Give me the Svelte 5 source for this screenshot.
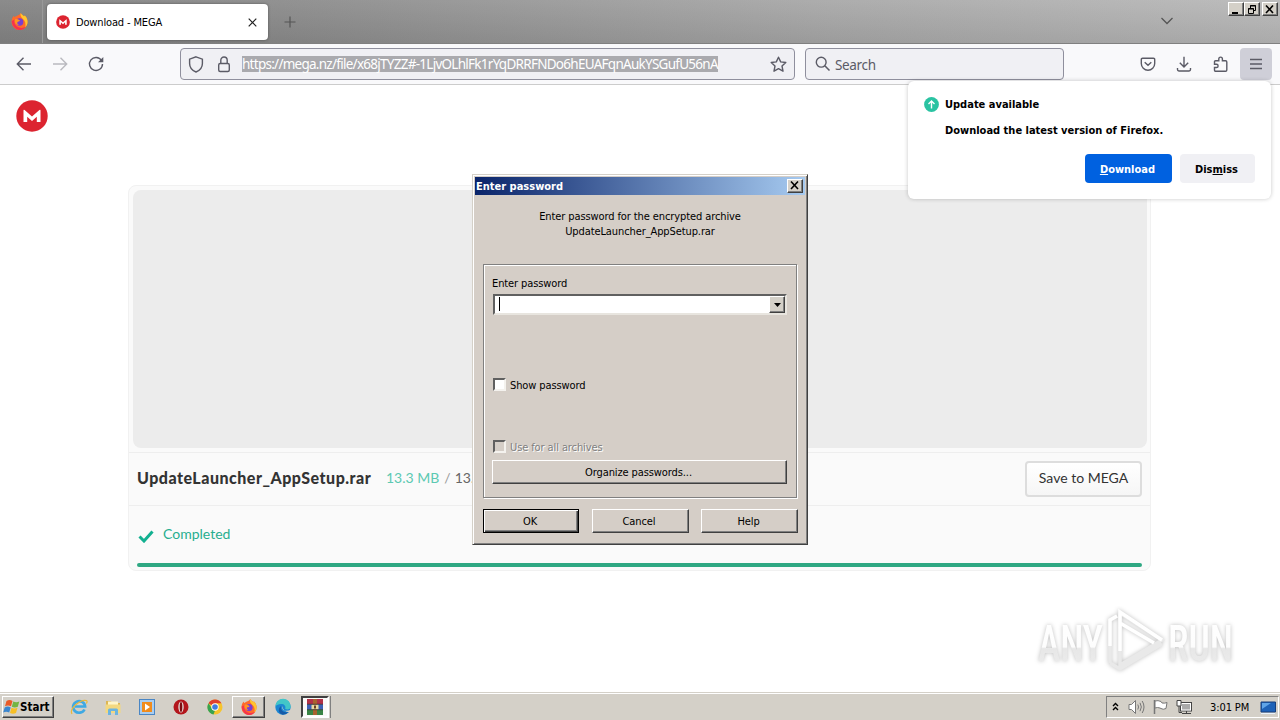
<script>
  let password = $state('');
  let showPassword = $state(false);

  const url = 'https://mega.nz/file/x68jTYZZ#-1LjvOLhlFk1rYqDRRFNDo6hEUAFqnAukYSGufU56nA';
  const fileName = 'UpdateLauncher_AppSetup.rar';
</script>

{#snippet mega(size)}
  <svg width={size} height={size} viewBox="0 0 32 32">
    <circle cx="16" cy="16" r="15.7" fill="#dc2430" />
    <path d="M7.500 22V10.500q0-1.200 1.100-.5L16 16.500l7.400-6.500q1.100-.7 1.100.5V22h-3.700v-5.300L16 21l-4.800-4.300V22z" fill="#fff" />
  </svg>
{/snippet}

{#snippet firefox(size)}
  <svg width={size} height={size} viewBox="0 0 16 16">
    <path d="M8 1.500C9 .8 9 .2 9.200 0c.7 1.500 2 2 3 3l.8-.6c2 2 2.600 4.200 2.600 6A7.500 7.500 0 0 1 .5 8.700C.4 6.500 1.300 4 2.600 2.600l.5 1.500C4.500 3 6 2.700 8 1.500z" fill="#ff6a2b" />
    <path d="M9.200 0c.7 1.500 2 2 3 3l.8-.6c2 2 2.600 4.200 2.600 6 0 2-1 4-2.200 5 .8-3 .1-6-2.400-8C9.500 4 8.300 2 9.200 0z" fill="#ffc52e" />
    <path d="M.7 7.500C1 12 4 15.800 8 15.900c3 0 5-1.600 6-3-3 1.800-8 1.600-10-2C3 9 3 7.500 3.600 6z" fill="#f5334e" />
    <circle cx="8.100" cy="8.500" r="3.500" fill="#7a3fd0" />
    <path d="M3.600 6c1.500-.8 3-.4 4 .5l1 .9c-1 .8-2 .6-2.600 1.200-.5 1 .3 2 1.600 2.300C5 11.500 3 9 3.600 6z" fill="#ff9520" />
  </svg>
{/snippet}

<div class="screen">
  <header class="tabs">
    <div class="ff-home">{@render firefox(17)}</div>
    <div class="tab">
      {@render mega(14)}
      <span class="tab-title">Download - MEGA</span>
      <svg class="tab-close" width="9" height="9" viewBox="0 0 9 9"><path d="M.7.7l7.600 7.600M8.300.7L.7 8.300" stroke="#222" stroke-width="1.200" /></svg>
    </div>
    <svg class="new-tab" width="12" height="12" viewBox="0 0 12 12"><path d="M6 .5v11M.5 6h11" stroke="#555" stroke-width="1.200" /></svg>
    <svg class="all-tabs" width="14" height="8" viewBox="0 0 14 8"><path d="M1.500 1L7 6.500 12.500 1" fill="none" stroke="#555" stroke-width="1.300" /></svg>
    <div class="win-buttons">
      <button class="cap" aria-label="Minimize"><svg width="10" height="9"><path d="M1 7h6v2H1z" /></svg></button>
      <button class="cap" aria-label="Restore"><svg width="10" height="9" fill="none" stroke="#000"><path d="M3.500 3V.5h5v5H7M3 1h6M1.500 3.500h5v5h-5zM1 4h6" /></svg></button>
      <button class="cap last" aria-label="Close"><svg width="10" height="9"><path d="M1 .5l7 7.500M8 .5L1 8" stroke="#000" stroke-width="1.600" /></svg></button>
    </div>
  </header>

  <nav class="toolbar">
    <svg class="back" width="16" height="16" viewBox="0 0 16 16"><path d="M15 8H1.500M7.500 1.800L1.300 8l6.200 6.200" /></svg>
    <svg class="forward" width="16" height="16" viewBox="0 0 16 16"><path d="M1 8h13.500M8.500 1.800L14.700 8l-6.200 6.200" /></svg>
    <svg class="reload" width="16" height="16" viewBox="0 0 16 16"><path d="M13.500 4.500A6.500 6.500 0 1 0 14.500 8" /><path d="M15.300 1v5.300H10z" fill="#5b5b66" stroke="none" /></svg>
    <div class="urlbar">
      <svg width="16" height="17" viewBox="0 0 16 17"><path d="M8 .8l6.400 2.400v4.300c0 4-2.600 7-6.400 8.500C4.200 14.500 1.600 11.500 1.600 7.500V3.200z" /></svg>
      <svg class="lock" width="14" height="17" viewBox="0 0 14 17"><rect x="1.700" y="7.500" width="10.600" height="8" rx="1.500" /><path d="M3.800 7.500V4.200a3.200 3.200 0 0 1 6.400 0v3.300" /></svg>
      <span class="url">{url}</span>
      <svg class="star" width="17" height="17" viewBox="0 0 17 17"><path d="M8.500 1.200l2.200 4.700 5.100.6-3.800 3.500 1 5.200-4.500-2.600L4 15.200 5 10 1.200 6.500l5.100-.6z" stroke-linejoin="round" /></svg>
    </div>
    <div class="search">
      <svg width="16" height="16" viewBox="0 0 16 16"><circle cx="6.200" cy="6.200" r="4.900" /><path d="M9.800 9.800l4.700 4.700" stroke-width="1.600" /></svg>
      <span>Search</span>
    </div>
    <div class="actions">
      <svg width="16" height="16" viewBox="0 0 16 16"><path d="M2.500 2.200h11a1.200 1.200 0 0 1 1.200 1.200V7.500a6.700 6.700 0 0 1-13.400 0V3.400a1.200 1.200 0 0 1 1.200-1.200zM4.700 6.200L8 9.300l3.300-3.100" /></svg>
      <svg width="16" height="16" viewBox="0 0 16 16"><path d="M8 .8v10M3.800 6.800L8 11l4.200-4.200M1.500 12v1.600q0 1.400 1.400 1.400h10.200q1.400 0 1.400-1.400V12" /></svg>
      <svg class="puzzle" width="16" height="16" viewBox="0 0 16 16"><path d="M2.500 4.700h3.300V2.900a1.800 1.800 0 0 1 3.600 0v1.800h3.200q1.200 0 1.200 1.200V14q0 1.200-1.200 1.200H2.700q-1.200 0-1.200-1.200v-2.500h2a1.600 1.600 0 0 0 0-3.200h-2V5.700q0-1 1-1z" /></svg>
      <button class="menu" aria-label="Menu"><svg width="14" height="12" viewBox="0 0 14 12"><path d="M1 1.500h12M1 6h12M1 10.500h12" /></svg></button>
    </div>
  </nav>

  <main>
    <div class="logo">{@render mega(32)}</div>
    <section class="card">
      <div class="preview"></div>
      <div class="file-row">
        <strong>{fileName}</strong>
        <span class="done">13.3 MB</span><span class="slash">/</span><span class="total">13.3 MB</span>
        <button class="save">Save to MEGA</button>
      </div>
      <div class="status">
        <svg width="16" height="13" viewBox="0 0 16 13"><path d="M1.500 6.500L6 11 14.500 1.500" fill="none" stroke="#12b090" stroke-width="3" /></svg>
        <span>Completed</span>
      </div>
      <div class="progress"></div>
    </section>

    <svg class="watermark" width="220" height="76" viewBox="0 0 220 76">
      <defs>
        <linearGradient id="wm" x1="0" y1="0" x2="0" y2="1">
          <stop offset="0" stop-color="#fff" />
          <stop offset=".55" stop-color="#fdfdfd" />
          <stop offset=".58" stop-color="#e7e7e7" />
          <stop offset="1" stop-color="#eee" />
        </linearGradient>
      </defs>
      <g class="wm-text">
        <text x="5" y="55" textLength="65" lengthAdjust="spacingAndGlyphs" fill="url(#wm)">ANY</text>
        <text x="135" y="55" textLength="65" lengthAdjust="spacingAndGlyphs" fill="url(#wm)">RUN</text>
        <g fill="none" stroke-width="3.500">
          <path d="M77 57V14l7-4M77 57l10 6 42-25M87 53V7l42 27-42 25z" stroke="#e9e9e9" />
          <path d="M77 40V14l7-4M87 45V6l42 28M87 17l34 20" stroke="#fff" />
        </g>
      </g>
    </svg>
  </main>

  <footer class="taskbar">
    <button class="start">
      <svg width="17" height="16" viewBox="0 0 17 16">
        <path d="M3.500 2q3-2 6 0L8 7.300q-3-1.500-6 0z" fill="#ea5a27" /><path d="M10.300 2.500q3 1.500 6 0l-1.500 5.200q-3 1.500-6 0z" fill="#73b543" />
        <path d="M1.700 8.400q3-1.700 6 0L6.200 13.500q-3-1.500-6 0z" fill="#3b86cf" /><path d="M8.500 8.800q3 1.500 6 0L13 14q-3 1.500-6 0z" fill="#f7bf26" />
      </svg><span>Start</span>
    </button>
    <div class="apps">
      <span class="app"><svg width="18" height="18" viewBox="0 0 18 18"><path d="M14.500 11.500a6 5.800 0 1 1 .6-3H5" fill="none" stroke="#3fa9e3" stroke-width="2.700" /><path d="M2 16C-1 11 10 1 16.500 2.500c1 .6.500 2-.2 3" fill="none" stroke="#e9b83a" stroke-width="1.200" /></svg></span>
      <span class="app"><svg width="18" height="18" viewBox="0 0 18 18"><path d="M2 3h5l1 2h8v9H2z" fill="#dcb654" /><path d="M4 3.500h10v4H4z" fill="#fff5c8" /><path d="M1.500 6.500h15V15h-15z" fill="#f3d880" /><path d="M4 17v-5q0-1.500 1.500-1.500h7q1.500 0 1.500 1.500v5h-3v-4H7v4z" fill="#6bb4e0" /></svg></span>
      <span class="app"><svg width="18" height="18" viewBox="0 0 18 18"><rect x="1.500" y="1.500" width="15" height="15" fill="#a9cdf0" stroke="#4a86c4" /><rect x="4" y="4" width="10" height="10" fill="#f18c1c" /><path d="M7 5.500l5 3.500-5 3.500z" fill="#fff" /></svg></span>
      <span class="app"><svg width="18" height="18" viewBox="0 0 18 18"><circle cx="9" cy="9" r="7.500" fill="#b3161c" /><ellipse cx="9" cy="9" rx="2.700" ry="5.500" fill="#e6d9d6" /><ellipse cx="9" cy="9" rx="1.300" ry="5" fill="#7d0d12" /></svg></span>
      <span class="app"><svg width="18" height="18" viewBox="0 0 18 18"><circle cx="9" cy="9" r="7.500" fill="#f6c42c" /><path d="M9 9L2.500 5.200A7.500 7.500 0 0 1 15.500 5.300H9z" fill="#e0402f" /><path d="M2.500 5.200L7 12l2 .5-1.500 4A7.500 7.500 0 0 1 2.500 5.200z" fill="#37a350" /><circle cx="9" cy="9" r="3.700" fill="#fff" /><circle cx="9" cy="9" r="2.800" fill="#3f7de0" /></svg></span>
      <span class="app raised">{@render firefox(16)}</span>
      <span class="app edge"><svg width="18" height="18" viewBox="0 0 18 18"><circle cx="9" cy="9" r="7.700" fill="#1b86d2" /><path d="M1.400 8.500A7.600 7.600 0 0 1 16.700 8.500c0 3-3 3.500-5.500 2.500 1-3-1-5-4-5-2.500 0-4.900 1-5.800 2.500z" fill="#42c6c8" /><path d="M7 8c-1 4 3 7.500 7.500 6A7.500 7.500 0 0 1 8 16.600C4 15 4 10 7 8z" fill="#155aa8" /><path d="M8.500 8q-1 4.500 3.500 4.800 3 .2 5-1.500v1.500l-1.500 1.500Q9 14 8.500 8z" fill="#d4d0c8" /></svg></span>
      <span class="app pressed"><svg width="18" height="18" viewBox="0 0 18 18"><path d="M1 1h16v5.300H1z" fill="#b23148" /><path d="M1 6.300h16v5.400H1z" fill="#3d60b5" /><path d="M1 11.700h16V17H1z" fill="#3a8545" /><path d="M7 1h4v16H7z" fill="#a9622e" /><path d="M5.500 6.500h7v5h-7z" fill="#e7d9a0" /><path d="M8 7.500h2v3H8z" fill="#6b4022" /><path d="M1 6.300h16M1 11.700h16" stroke="#222" stroke-width=".7" /></svg></span>
    </div>
    <div class="tray">
      <svg class="chevrons" width="7" height="9" viewBox="0 0 7 9"><path d="M1 4l2.500-2.500L6 4M1 8l2.500-2.500L6 8" fill="none" stroke="#000" stroke-width="1.400" /></svg>
      <svg class="speaker" width="17" height="16" viewBox="0 0 17 16"><path d="M1 5.500h2.500l4-4v13l-4-4H1z" fill="#fff" stroke="#777" /><path d="M9.800 5.500q1.500 2.500 0 5M12 3.800q2.700 4.200 0 8.400M14.200 2q3.600 6 0 12" fill="none" stroke="#777" /></svg>
      <svg class="flag" width="17" height="16" viewBox="0 0 17 16"><path d="M2.500 1v14" stroke="#777" stroke-width="1.500" /><path d="M3 2q3-1 6 .5l1 1.500q3 .5 5-.5l-1 6q-3 1.500-5 0L8 9Q5.500 8 3 9z" fill="#fff" stroke="#777" /></svg>
      <svg class="net" width="17" height="16" viewBox="0 0 17 16"><rect x="4.500" y="3.500" width="11" height="8.500" fill="#aaa" stroke="#444" /><rect x="5.500" y="4.500" width="9" height="6.500" fill="none" stroke="#fff" /><path d="M6 14.500h9M10.500 12v2.500M3 7v6.500h3" stroke="#444" fill="none" /><path d="M1 1.500h4V7H1z" fill="#fff" stroke="#444" /></svg>
      <span class="clock">3:01 PM</span>
      <svg class="desk" width="16" height="14" viewBox="0 0 16 14"><path d="M1 1h14.500v10H1z" fill="#1e62b8" stroke="#173f7c" /><path d="M2 2h9L2 8z" fill="#5fa4e8" /><path d="M1 12.500h14" stroke="#e9f2fb" /></svg>
    </div>
  </footer>

  <aside class="update">
    <svg width="15" height="15" viewBox="0 0 15 15"><circle cx="7.500" cy="7.500" r="7.400" fill="#2ac3a2" /><path d="M7.500 11.500v-7M4.500 7l3-3 3 3" fill="none" stroke="#fff" stroke-width="1.400" /></svg>
    <div class="update-body">
      <h2>Update available</h2>
      <p>Download the latest version of Firefox.</p>
      <div class="update-buttons">
        <button class="primary"><u>D</u>ownload</button>
        <button>Dis<u>m</u>iss</button>
      </div>
    </div>
  </aside>

  <div class="dialog">
    <div class="titlebar">
      <span>Enter password</span>
      <button class="cap" aria-label="Close"><svg width="10" height="9"><path d="M1 .5l7 7.500M8 .5L1 8" stroke="#000" stroke-width="1.600" /></svg></button>
    </div>
    <p class="prompt">Enter password for the encrypted archive<br />{fileName}</p>
    <div class="group">
      <label class="pw-label" for="pw">Enter password</label>
      <div class="combo">
        <span class="caret"></span>
        <input id="pw" bind:value={password} type={showPassword ? 'text' : 'password'} />
        <button class="drop" aria-label="History"><svg width="7" height="4"><path d="M0 0h7L3.500 4z" /></svg></button>
      </div>
      <label class="check show"><input type="checkbox" bind:checked={showPassword} /><i></i><span>Show password</span></label>
      <label class="check all"><input type="checkbox" disabled /><i></i><span>Use for all archives</span></label>
      <button class="btn organize">Organize passwords...</button>
    </div>
    <div class="buttons">
      <button class="btn default">OK</button>
      <button class="btn">Cancel</button>
      <button class="btn">Help</button>
    </div>
  </div>
</div>

<style>
:global(body) {
  margin: 0;
  overflow: hidden;
}

.screen {
  position: relative;
  display: flex;
  flex-direction: column;
  width: 1280px;
  height: 720px;
  background: #fff;
  color: #000;
  font-family: "DejaVu Sans Condensed", "DejaVu Sans", sans-serif;
  font-stretch: condensed;
  font-size: 11px;
}

.screen * {
  box-sizing: border-box;
}

svg {
  display: block;
  flex: none;
}

button {
  padding: 0;
  border: 0;
  color: inherit;
  font: inherit;
  letter-spacing: inherit;
}

/* tab strip */
.tabs {
  display: flex;
  height: 44px;
  background: linear-gradient(to bottom, rgba(255, 255, 255, 0.05), rgba(0, 0, 0, 0.08)), linear-gradient(to right, #858585, #8c8c8c 22%, #a9a9a9 65%, #b9b9b9);
  border-bottom: 1px solid #808080;
}

.ff-home {
  width: 43px;
  padding: 13px 0 0 11px;
  border-right: 1px solid #999;
}

.tab {
  display: flex;
  align-items: center;
  width: 221px;
  height: 36px;
  margin: 4px 0 0 4px;
  padding: 0 11px 0 9px;
  background: #fff;
  border-radius: 4px;
  box-shadow: 0 0 3px rgba(0, 0, 0, 0.4);
}

.tab-title {
  flex: 1;
  margin: 1px 0 0 6px;
  letter-spacing: -0.15px;
}

.new-tab {
  margin: 16px 0 0 16px;
}

.all-tabs {
  margin: 17px 54px 0 auto;
}

.win-buttons {
  display: flex;
  margin: 2px 2px 0 0;
}

.cap {
  display: flex;
  align-items: center;
  justify-content: center;
  width: 16px;
  height: 14px;
  background: #d4d0c8;
  border: 1px solid;
  border-color: #fff #404040 #404040 #fff;
  box-shadow: inset -1px -1px 0 #808080;
}

.cap.last {
  margin-left: 2px;
}

/* toolbar */
.toolbar {
  display: flex;
  align-items: center;
  height: 41px;
  background: #f9f9fb;
  border-bottom: 1px solid #ccc;
  font-family: "Noto Sans", sans-serif;
  font-size: 13.5px;
}

.toolbar svg {
  fill: none;
  stroke: #5b5b66;
  stroke-width: 1.4;
}

.back {
  margin-left: 16px;
}

.forward {
  margin-left: 20px;
  opacity: 0.4;
}

.reload {
  margin-left: 20px;
}

.urlbar,
.search {
  display: flex;
  align-items: center;
  height: 32px;
  background: #f0f0f4;
  border: 1px solid #8f8f9d;
  border-radius: 4px;
}

.urlbar {
  width: 615px;
  margin-left: 76px;
  padding: 0 7px;
}

.lock {
  margin-left: 13px;
}

.url {
  margin-left: 11px;
  height: 16px;
  line-height: 17px;
  background: #aaaaae;
  color: #fff;
  white-space: nowrap;
  letter-spacing: -0.73px;
}

.star {
  margin-left: auto;
}

.search {
  width: 259px;
  margin-left: 10px;
  padding-left: 9px;
  color: #5b5b66;
}

.search span {
  margin: 1px 0 0 4px;
  letter-spacing: -0.35px;
}

.actions {
  display: flex;
  align-items: center;
  gap: 20px;
  margin: 0 8px 0 auto;
}

.puzzle {
  margin-left: 1px;
}

.menu {
  display: flex;
  align-items: center;
  justify-content: center;
  width: 32px;
  height: 32px;
  margin-left: -9px;
  background: #cfcfd8;
  border-radius: 4px;
}

/* page */
main {
  flex: 1;
  display: flex;
  flex-direction: column;
  font-family: Lato, sans-serif;
}

.logo {
  height: 48px;
  padding: 15px 0 0 16px;
}

.card {
  width: 1023px;
  height: 386px;
  margin: 52px 0 0 128px;
  background: #fafafa;
  border: 1px solid #f1f1f1;
  border-radius: 8px;
}

.preview {
  height: 258px;
  margin: 4px 3px 4px 4px;
  background: #ececec;
  border-radius: 8px;
}

.file-row {
  display: flex;
  align-items: center;
  height: 54px;
  padding: 0 8px;
  border: 1px solid #eee;
  border-width: 1px 0;
  font-size: 14px;
  color: #666;
}

.file-row strong {
  width: 249px;
  font-size: 16px;
  font-weight: 900;
  letter-spacing: 0.5px;
  color: #333;
}

.file-row strong,
.file-row span {
  margin-top: -4px;
}

.done {
  color: #5cc9b2;
}

.slash {
  margin: 0 5px;
  color: #999;
}

.total {
  margin-left: -1px;
}

.save {
  width: 117px;
  height: 36px;
  margin-left: auto;
  padding-bottom: 3px;
  background: linear-gradient(#fff, #f6f6f6);
  border: 2px solid #ddd;
  border-radius: 4px;
  color: #333;
}

.status {
  display: flex;
  align-items: center;
  height: 57px;
  padding: 4px 0 0 9px;
  font-size: 14px;
  color: #27ae8f;
}

.status span {
  margin: -7px 0 0 9px;
}

.progress {
  height: 4px;
  margin: 0 8px;
  background: #2fa883;
  border-radius: 2px;
}

.watermark {
  align-self: flex-end;
  margin: 35px 27px 0 0;
}

.wm-text {
  filter: drop-shadow(0 0 2px rgba(0, 0, 0, 0.25));
  font-family: Roboto, sans-serif;
  font-weight: 500;
  font-size: 50px;
}

/* taskbar */
.taskbar {
  display: flex;
  align-items: center;
  height: 28px;
  background: #d4d0c8;
  border-top: 1px solid #d4d0c8;
  box-shadow: inset 0 1px 0 #fff;
}

.start {
  display: flex;
  align-items: center;
  width: 52px;
  height: 22px;
  margin: 1px 0 0 2px;
  background: #d4d0c8;
  border: 1px solid;
  border-color: #fff #404040 #404040 #fff;
  box-shadow: inset -1px -1px 0 #808080;
  font-weight: bold;
}

.start span {
  font-size: 11.5px;
}

.apps {
  display: flex;
  align-items: center;
  margin: 1px 0 0 8px;
}

.app {
  display: flex;
  align-items: center;
  justify-content: center;
  width: 34px;
  height: 22px;
}

.raised {
  width: 33px;
  border: 1px solid;
  border-color: #fff #404040 #404040 #fff;
  box-shadow: inset -1px -1px 0 #808080;
}

.edge {
  margin-left: 1px;
}

.pressed {
  width: 28px;
  margin-left: 1px;
  background: #fbfaf8;
  border: 2px solid;
  border-color: #404040 #fff #fff #404040;
  box-shadow: 1px 0 0 #d4d0c8, 2px 0 0 #808080;
}

.tray {
  display: flex;
  align-items: center;
  width: 173px;
  height: 22px;
  margin: 1px 1px 0 auto;
  padding-left: 5px;
  border: 1px solid;
  border-color: #808080 #fff #fff #808080;
}

.chevrons {
  margin-top: -2px;
}

.speaker {
  margin-left: 9px;
}

.flag,
.net {
  margin-left: 7px;
}

.clock {
  margin-left: 17px;
  letter-spacing: -0.1px;
}

.desk {
  margin: 1px 2px 0 auto;
}

/* update doorhanger */
.update {
  position: absolute;
  top: 81px;
  left: 908px;
  display: flex;
  width: 363px;
  height: 118px;
  padding: 16px 16px 0;
  background: #fff;
  border-radius: 6px;
  box-shadow: 0 0 4px rgba(0, 0, 0, 0.22);
  font-weight: bold;
}

.update-body {
  flex: 1;
  margin: 1px 0 0 6px;
}

.update h2,
.update p {
  margin: 0;
  font-size: 11px;
  line-height: 14px;
}

.update p {
  margin-top: 12px;
}

.update-buttons {
  display: flex;
  justify-content: flex-end;
  gap: 8px;
  margin-top: 16px;
}

.update-buttons button {
  width: 75px;
  height: 29px;
  padding: 1px 2px 0 0;
  background: #f0f0f4;
  border-radius: 4px;
}

.update-buttons .primary {
  width: 87px;
  background: #0061e0;
  color: #fff;
}

/* archive password dialog */
.dialog {
  position: absolute;
  top: 174px;
  left: 472px;
  width: 336px;
  height: 371px;
  padding: 2px;
  background: #d5cec7;
  border: 1px solid;
  border-color: #d4d0c8 #404040 #404040 #d4d0c8;
  box-shadow: inset 1px 1px 0 #fff, inset -1px -1px 0 #808080;
  letter-spacing: -0.1px;
}

.titlebar {
  display: flex;
  align-items: center;
  justify-content: space-between;
  height: 18px;
  padding: 0 2px 0 1px;
  background: linear-gradient(to right, #0a246a, #a6caf0);
  color: #fff;
  font-weight: bold;
  letter-spacing: 0;
}

.titlebar .cap {
  margin-top: -1px;
  color: #000;
}

.prompt {
  margin: 14px 0 0;
  text-align: center;
  line-height: 15px;
}

.group {
  display: flex;
  flex-direction: column;
  width: 314px;
  height: 234px;
  margin: 25px 0 0 8px;
  padding: 12px 9px 0 8px;
  border: 1px solid #808080;
  box-shadow: 1px 1px 0 #fff, inset 1px 1px 0 #fff;
}

.pw-label {
  height: 14px;
  line-height: 14px;
}

.combo {
  display: flex;
  align-items: center;
  height: 21px;
  margin: 3px 0 0 1px;
  padding: 0 0 0 4px;
  background: #fff;
  border: 2px solid;
  border-color: #606060 #e8e5df #e8e5df #606060;
}

.caret {
  width: 1px;
  height: 14px;
  margin-top: -1px;
  background: #000;
}

.combo input {
  flex: 1;
  min-width: 0;
  height: 16px;
  padding: 0;
  border: 0;
  outline: 0;
  background: none;
  font: inherit;
}

.drop {
  display: flex;
  align-items: center;
  justify-content: center;
  width: 16px;
  height: 17px;
  background: #d4d0c8;
  border: 1px solid;
  border-color: #fff #404040 #404040 #fff;
  box-shadow: inset -1px -1px 0 #808080;
}

.check {
  display: flex;
  align-items: center;
  height: 14px;
  margin-left: 1px;
}

.check input {
  display: none;
}

.check i {
  width: 13px;
  height: 13px;
  margin-right: 4px;
  background: #fff;
  border: 2px solid;
  border-color: #606060 #f4f2ee #f4f2ee #606060;
}

.check span {
  margin-top: 2px;
}

.show {
  margin-top: 62px;
}

.all {
  margin-top: 48px;
  color: #808080;
  text-shadow: 1px 1px 0 #fff;
}

.all i {
  background: #d5cec7;
}

.btn {
  height: 24px;
  padding-right: 2px;
  background: #d5cec7;
  border: 1px solid;
  border-color: #fff #404040 #404040 #fff;
  box-shadow: inset -1px -1px 0 #808080;
}

.organize {
  width: 295px;
  margin-top: 7px;
}

.buttons {
  display: flex;
  justify-content: space-between;
  width: 315px;
  margin: 11px 0 0 8px;
}

.buttons .btn {
  width: 97px;
}

.buttons .default {
  width: 96px;
  border-color: #000;
  box-shadow: inset 1px 1px 0 #fff, inset -1px -1px 0 #404040, inset -2px -2px 0 #808080;
}
</style>
